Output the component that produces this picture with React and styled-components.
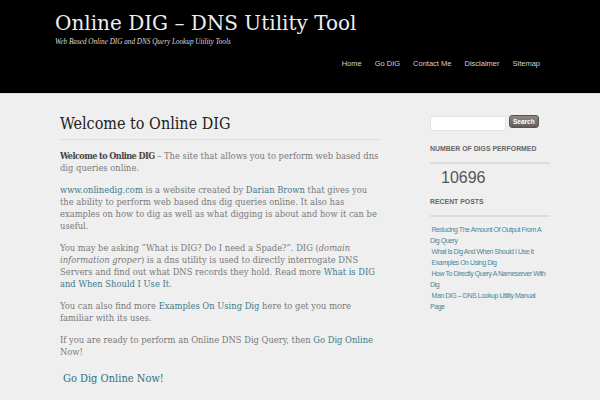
import React from 'react'
import styled, { createGlobalStyle } from 'styled-components'

const GlobalStyle = createGlobalStyle`
  html, body {
    margin: 0;
    padding: 0;
    background: #efefef;
  }
`

const Page = styled.div`
  width: 600px;
  min-height: 400px;
  background: #efefef;
  overflow: hidden;
`

const Header = styled.header`
  height: 94px;
  background: #000;
  box-sizing: border-box;
  padding: 10px 0 0 55px;
  border-bottom: 1px solid #dcdcdc;
`

const SiteTitle = styled.h1`
  margin: 0;
  font-family: "DejaVu Serif", serif;
  font-weight: normal;
  font-size: 20px;
  line-height: 27px;
  color: #eee;
`

const Tagline = styled.div`
  font-family: "Liberation Serif", serif;
  font-style: italic;
  font-size: 7.2px;
  line-height: 10px;
  color: #ddd;
`

const Nav = styled.nav`
  display: flex;
  justify-content: flex-end;
  gap: 13px;
  margin-top: 12px;
  padding-right: 60px;
`

const NavItem = styled.a`
  font-family: "Liberation Sans", Arial, sans-serif;
  font-size: 7.5px;
  line-height: 10px;
  color: #d0d0d0;
  text-decoration: none;
`

const Body = styled.div`
  display: flex;
  padding: 21px 0 0 60px;
`

const Main = styled.main`
  width: 320px;
`

const Heading = styled.h2`
  margin: 0;
  padding-bottom: 6px;
  border-bottom: 1px solid #dedede;
  font-family: "DejaVu Serif Condensed", "DejaVu Serif", serif;
  font-stretch: condensed;
  font-weight: normal;
  font-size: 16px;
  line-height: 18px;
  color: #222;
`

const Para = styled.p`
  margin: 10px 0 0;
  font-family: "DejaVu Serif Condensed", "DejaVu Serif", serif;
  font-stretch: condensed;
  font-size: 9.3px;
  line-height: 12px;
  color: #7a7a7a;
  &:first-of-type {
    margin-top: 10px;
  }
`

const Strong = styled.strong`
  color: #444;
  font-size: 9px;
  letter-spacing: -0.55px;
`

const Link = styled.a`
  color: #3e7b8c;
  text-decoration: none;
`

const BigLink = styled.a`
  display: block;
  margin: 13px 0 0 3px;
  font-family: "DejaVu Serif Condensed", "DejaVu Serif", serif;
  font-stretch: condensed;
  font-size: 11px;
  line-height: 16px;
  color: #2f6f80;
  text-decoration: none;
`

const Sidebar = styled.aside`
  width: 120px;
  margin-left: 50px;
`

const SearchRow = styled.div`
  display: flex;
  align-items: flex-start;
  gap: 3px;
`

const SearchInput = styled.div`
  width: 76px;
  height: 15px;
  background: #fff;
  border: 1px solid #e4e4e4;
  box-sizing: border-box;
  margin-top: 1px;
`

const SearchButton = styled.button`
  height: 13px;
  padding: 0 3px;
  border: 1px solid #555;
  border-radius: 3px;
  background: linear-gradient(#8a8a8a, #5e5e5e);
  color: #fff;
  font-family: "Liberation Sans", Arial, sans-serif;
  font-weight: bold;
  font-size: 6.5px;
  line-height: 11px;
`

const WidgetTitle = styled.h3`
  margin: ${(p) => p.$top}px 0 0;
  padding-bottom: 8px;
  border-bottom: 2px solid #dcdcdc;
  font-family: "Liberation Sans", Arial, sans-serif;
  font-weight: bold;
  font-size: 6.9px;
  line-height: 10px;
  color: #666;
`

const Counter = styled.div`
  margin: 5px 0 0 11px;
  font-family: "Liberation Sans", Arial, sans-serif;
  font-size: 16px;
  line-height: 18px;
  color: #555;
`

const PostList = styled.ul`
  list-style: none;
  margin: 7px 0 0;
  padding: 0;
`

const PostItem = styled.li`
  font-family: "Liberation Sans", Arial, sans-serif;
  font-size: 7px;
  line-height: 11px;
  letter-spacing: -0.45px;
  color: #4a8799;
  &::before {
    content: '\\00a0 ';
  }
`

const navItems = ['Home', 'Go DIG', 'Contact Me', 'Disclaimer', 'Sitemap']

const posts = [
  'Reducing The Amount Of Output From A Dig Query',
  'What Is Dig And When Should I Use It',
  'Examples On Using Dig',
  'How To Directly Query A Nameserver With Dig',
  'Man DIG – DNS Lookup Utility Manual Page',
]

export default function App() {
  return (
    <Page>
      <GlobalStyle />
      <Header>
        <SiteTitle>Online DIG – DNS Utility Tool</SiteTitle>
        <Tagline>Web Based Online DIG and DNS Query Lookup Utility Tools</Tagline>
        <Nav>
          {navItems.map((n) => (
            <NavItem key={n}>{n}</NavItem>
          ))}
        </Nav>
      </Header>
      <Body>
        <Main>
          <Heading>Welcome to Online DIG</Heading>
          <Para>
            <Strong>Welcome to Online DIG</Strong> – The site that allows you to perform web based dns dig queries online.
          </Para>
          <Para>
            <Link>www.onlinedig.com</Link> is a website created by <Link>Darian Brown</Link> that gives you the ability to perform web based dns dig queries online. It also has examples on how to dig as well as what digging is about and how it can be useful.
          </Para>
          <Para>
            You may be asking “What is DIG? Do I need a Spade?”. DIG (<em>domain information groper</em>) is a dns utility is used to directly interrogate DNS Servers and find out what DNS records they hold. Read more <Link>What is DIG and When Should I Use It</Link>.
          </Para>
          <Para>
            You can also find more <Link>Examples On Using Dig</Link> here to get you more familiar with its uses.
          </Para>
          <Para>
            If you are ready to perform an Online DNS Dig Query, then <Link>Go Dig Online</Link> Now!
          </Para>
          <BigLink>Go Dig Online Now!</BigLink>
        </Main>
        <Sidebar>
          <SearchRow>
            <SearchInput />
            <SearchButton>Search</SearchButton>
          </SearchRow>
          <WidgetTitle $top={13}>NUMBER OF DIGS PERFORMED</WidgetTitle>
          <Counter>10696</Counter>
          <WidgetTitle $top={10}>RECENT POSTS</WidgetTitle>
          <PostList>
            {posts.map((p) => (
              <PostItem key={p}>{p}</PostItem>
            ))}
          </PostList>
        </Sidebar>
      </Body>
    </Page>
  )
}
